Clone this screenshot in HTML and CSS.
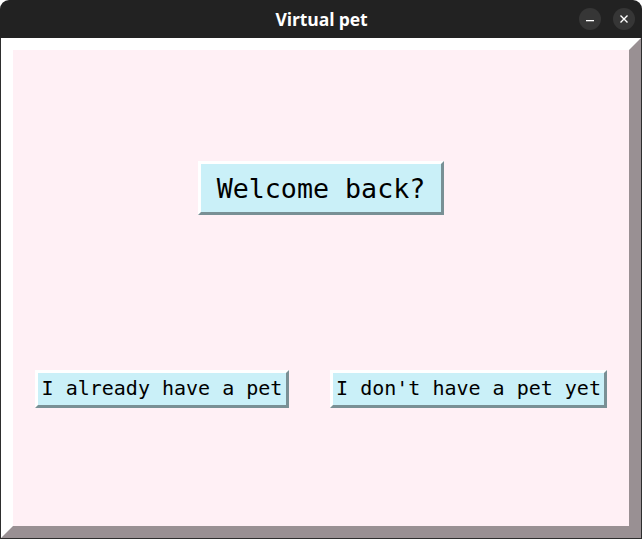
FILE: index.html
```html
<!DOCTYPE html>
<html>
<head>
<meta charset="utf-8">
<link rel="stylesheet" href="styles.css">
</head>
<body>
<div class="window">
  <div class="titlebar">
    <span class="title">Virtual pet</span>
    <div class="controls">
      <span class="ctl"><svg width="22" height="22" viewBox="0 0 22 22"><rect x="7" y="12" width="8" height="1.3" fill="#fff"/></svg></span>
      <span class="ctl"><svg width="22" height="22" viewBox="0 0 22 22"><path d="M7.5 7.5 L14.5 14.5 M14.5 7.5 L7.5 14.5" stroke="#fff" stroke-width="1.4"/></svg></span>
    </div>
  </div>
  <div class="client">
    <div class="frame">
      <div class="welcome">Welcome back?</div>
      <div class="row">
        <button class="btn btn-have">I already have a pet</button>
        <button class="btn btn-new">I don't have a pet yet</button>
      </div>
    </div>
  </div>
</div>
</body>
</html>
```

FILE: styles.css
```css
html, body {
  margin: 0;
  padding: 0;
  background: #ffffff;
}
.window {
  width: 642px;
  height: 539px;
  display: flex;
  flex-direction: column;
}
.titlebar {
  height: 38px;
  background: #222222;
  border-radius: 9px 9px 0 0;
  position: relative;
  display: flex;
  align-items: center;
  justify-content: center;
  flex: none;
}
.title {
  color: #ffffff;
  font-family: "Open Sans", "DejaVu Sans", sans-serif;
  font-weight: 700;
  font-size: 17.5px;
  letter-spacing: -0.1px;
  margin-left: 1px;
}
.controls {
  position: absolute;
  right: 7px;
  top: 8px;
  display: flex;
  gap: 12px;
}
.ctl {
  width: 22px;
  height: 22px;
  border-radius: 50%;
  background: #363636;
  display: block;
}
.ctl svg { display: block; }
.client {
  flex: 1;
  border: 1px solid #2e2e2e;
  border-top: none;
  display: flex;
}
.frame {
  flex: 1;
  background: #fff0f5;
  border: 12px solid;
  border-color: #ffffff #999093 #999093 #ffffff;
  display: flex;
  flex-direction: column;
  align-items: center;
}
.welcome {
  margin-top: 111px;
  width: 246px;
  height: 54px;
  box-sizing: border-box;
  background: #caf0f8;
  border: 3px solid;
  border-color: #ffffff #799095 #799095 #ffffff;
  font-family: "DejaVu Sans Mono", monospace;
  font-size: 26.67px;
  color: #000;
  display: flex;
  align-items: center;
  justify-content: center;
}
.row {
  margin-top: 155px;
  align-self: stretch;
  display: flex;
  padding-left: 22px;
  gap: 41px;
}
.btn {
  height: 38px;
  box-sizing: border-box;
  background: #caf0f8;
  border: 3px solid;
  border-color: #ffffff #799095 #799095 #ffffff;
  font-family: "DejaVu Sans Mono", monospace;
  font-size: 20px;
  color: #000;
  padding: 0 0 2px 0;
  margin: 0;
  display: flex;
  align-items: center;
  justify-content: center;
}
.btn-have { width: 254px; }
.btn-new { width: 277px; }
```
